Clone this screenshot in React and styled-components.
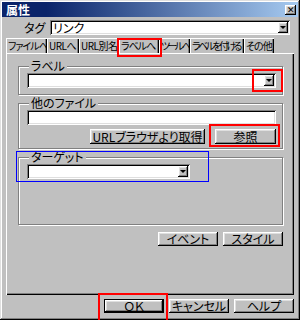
import React from 'react';
import styled, { createGlobalStyle, css } from 'styled-components';

const GlobalStyle = createGlobalStyle`
  html, body {
    margin: 0;
    padding: 0;
    background: #c0c0c0;
  }
  body {
    font-family: "Noto Sans CJK JP", "Liberation Sans", sans-serif;
    font-size: 12px;
    color: #000;
    font-feature-settings: "palt";
  }
`;

const raised = css`
  box-shadow: inset -1px -1px 0 #000, inset 1px 1px 0 #fff,
    inset -2px -2px 0 #808080, inset 2px 2px 0 #dfdfdf;
`;

const sunken = css`
  box-shadow: inset 1px 1px 0 #808080, inset -1px -1px 0 #fff,
    inset 2px 2px 0 #000, inset -2px -2px 0 #dfdfdf;
`;

const Window = styled.div`
  position: relative;
  width: 300px;
  height: 320px;
  box-sizing: border-box;
  padding: 2px;
  background: #c0c0c0;
  display: flex;
  flex-direction: column;
  overflow: hidden;
  box-shadow: inset -1px -1px 0 #000, inset 1px 1px 0 #dfdfdf,
    inset -2px -2px 0 #808080, inset 2px 2px 0 #fff;
`;

const TitleBar = styled.div`
  height: 15px;
  display: flex;
  align-items: center;
  justify-content: space-between;
  padding: 0 2px 0 4px;
  background: linear-gradient(90deg, #0a246a 0%, #0a246a 15%, #a6caf0 100%);
  color: #fff;
  font-weight: bold;
  font-size: 12px;
  line-height: 15px;
`;

const CloseButton = styled.div`
  width: 11px;
  height: 10px;
  background: #c0c0c0;
  color: #000;
  font-size: 9px;
  line-height: 10px;
  font-weight: normal;
  display: flex;
  align-items: center;
  justify-content: center;
  ${raised}
`;

const TagRow = styled.div`
  margin-top: 3px;
  height: 15px;
  display: flex;
  align-items: center;
  padding-left: 22px;
`;

const FieldLabel = styled.span`
  width: ${p => p.$w}px;
  font-size: 12px;
  line-height: 15px;
`;

const Combo = styled.div`
  width: ${p => p.$w}px;
  height: 15px;
  box-sizing: border-box;
  padding: 2px;
  background: #fff;
  display: flex;
  flex-shrink: 0;
  ${sunken}
`;

const ComboText = styled.div`
  flex: 1;
  font-size: 12px;
  line-height: 11px;
  padding-left: 1px;
  white-space: nowrap;
`;

const DropButton = styled.div`
  width: 10px;
  background: #c0c0c0;
  display: flex;
  align-items: center;
  justify-content: center;
  ${raised}
`;

const Arrow = styled.span`
  width: 0;
  height: 0;
  border-left: 3px solid transparent;
  border-right: 3px solid transparent;
  border-top: 3px solid #000;
`;

const TextField = styled.div`
  width: ${p => p.$w}px;
  height: 15px;
  flex-shrink: 0;
  box-sizing: border-box;
  background: #fff;
  ${sunken}
`;

const TabStrip = styled.div`
  margin: 3px 0 0 4px;
  height: 15px;
  display: flex;
`;

const Tab = styled.div`
  width: ${p => p.$w}px;
  height: 15px;
  box-sizing: border-box;
  padding: 1px 0 0 2px;
  font-size: 10px;
  line-height: 13px;
  letter-spacing: ${p => p.$ls}px;
  white-space: nowrap;
  overflow: hidden;
  box-shadow: inset 1px 1px 0 #fff, inset -1px 0 0 #000, inset -2px 0 0 #808080;
`;

const Panel = styled.div`
  margin-left: 4px;
  width: 288px;
  height: 242px;
  box-sizing: border-box;
  padding: 7px 0 0 12px;
  display: flex;
  flex-direction: column;
  box-shadow: inset 1px 1px 0 #fff, inset -1px -1px 0 #000,
    inset -2px -2px 0 #808080;
`;

const Group = styled.fieldset`
  margin: ${p => p.$mt || 0}px 0 0 0;
  width: 265px;
  flex-shrink: 0;
  box-sizing: border-box;
  min-width: 0;
  padding: 1px 6px ${p => p.$pb}px 8px;
  border: 1px solid #808080;
  box-shadow: inset 1px 1px 0 #fff, 1px 1px 0 #fff;
`;

const GroupBody = styled.div`
  display: flex;
  flex-direction: column;
  gap: 4px;
`;

const Legend = styled.legend`
  margin-left: 2px;
  padding: 0 2px;
  font-size: 12px;
  line-height: 12px;
  background: #c0c0c0;
`;

const ButtonRow = styled.div`
  display: flex;
  justify-content: flex-end;
  flex-shrink: 0;
  gap: ${p => p.$gap}px;
  margin-top: ${p => p.$mt || 0}px;
  width: ${p => (p.$w ? `${p.$w}px` : 'auto')};
  padding-right: ${p => p.$pr || 0}px;
`;

const Button = styled.div`
  width: ${p => p.$w}px;
  height: ${p => p.$h || 15}px;
  box-sizing: border-box;
  display: flex;
  align-items: center;
  justify-content: center;
  font-size: 12px;
  line-height: 12px;
  white-space: nowrap;
  background: #c0c0c0;
  ${raised}
  ${p => p.$default && css`
    border: 1px solid #000;
  `}
`;

const Mark = styled.div`
  position: absolute;
  left: ${p => p.$x}px;
  top: ${p => p.$y}px;
  width: ${p => p.$w}px;
  height: ${p => p.$h}px;
  box-sizing: border-box;
  border: ${p => (p.$blue ? '1px solid #0000ff' : '2px solid #ff0000')};
  pointer-events: none;
`;

const tabs = [
  { label: 'ファイルへ', w: 41, ls: -1 },
  { label: 'URLへ', w: 32, ls: -0.5 },
  { label: 'URL別名', w: 40, ls: -0.5 },
  { label: 'ラベルへ', w: 40, ls: -1 },
  { label: 'ツールへ', w: 31, ls: -2.6 },
  { label: 'ラベルを付ける', w: 54, ls: -2.6 },
  { label: 'その他', w: 30, ls: -1 },
];

const ComboBox = ({ w, text }) => (
  <Combo $w={w}>
    <ComboText>{text}</ComboText>
    <DropButton>
      <Arrow />
    </DropButton>
  </Combo>
);

export default function App() {
  return (
    <>
      <GlobalStyle />
      <Window>
        <TitleBar>
          <span>属性</span>
          <CloseButton>✕</CloseButton>
        </TitleBar>

        <TagRow>
          <FieldLabel $w={26}>タグ</FieldLabel>
          <ComboBox w={240} text="リンク" />
        </TagRow>

        <TabStrip>
          {tabs.map(t => (
            <Tab key={t.label} $w={t.w} $ls={t.ls}>{t.label}</Tab>
          ))}
        </TabStrip>

        <Panel>
          <Group $pb={6}>
            <Legend>ラベル</Legend>
            <ComboBox w={249} text="" />
          </Group>

          <Group $mt={2} $pb={4}>
            <Legend>他のファイル</Legend>
            <GroupBody>
              <TextField $w={249} />
              <ButtonRow $gap={10}>
                <Button $w={115}>URLブラウザより取得</Button>
                <Button $w={61}>参照</Button>
              </ButtonRow>
            </GroupBody>
          </Group>

          <Group $mt={2} $pb={45}>
            <Legend>ターゲット</Legend>
            <ComboBox w={163} text="" />
          </Group>

          <ButtonRow $gap={5} $mt={7} $w={265}>
            <Button $w={60} $h={14}>イベント</Button>
            <Button $w={60} $h={14}>スタイル</Button>
          </ButtonRow>
        </Panel>

        <ButtonRow $gap={5} $mt={4} $pr={4}>
          <Button $w={60} $h={14} $default>ＯＫ</Button>
          <Button $w={60} $h={14}>キャンセル</Button>
          <Button $w={60} $h={14}>ヘルプ</Button>
        </ButtonRow>

        <Mark $x={117} $y={38} $w={45} $h={19} />
        <Mark $x={252} $y={69} $w={31} $h={23} />
        <Mark $x={209} $y={124} $w={71} $h={23} />
        <Mark $x={98} $y={293} $w={70} $h={30} />
        <Mark $blue $x={16} $y={151} $w={193} $h={31} />
      </Window>
    </>
  );
}
